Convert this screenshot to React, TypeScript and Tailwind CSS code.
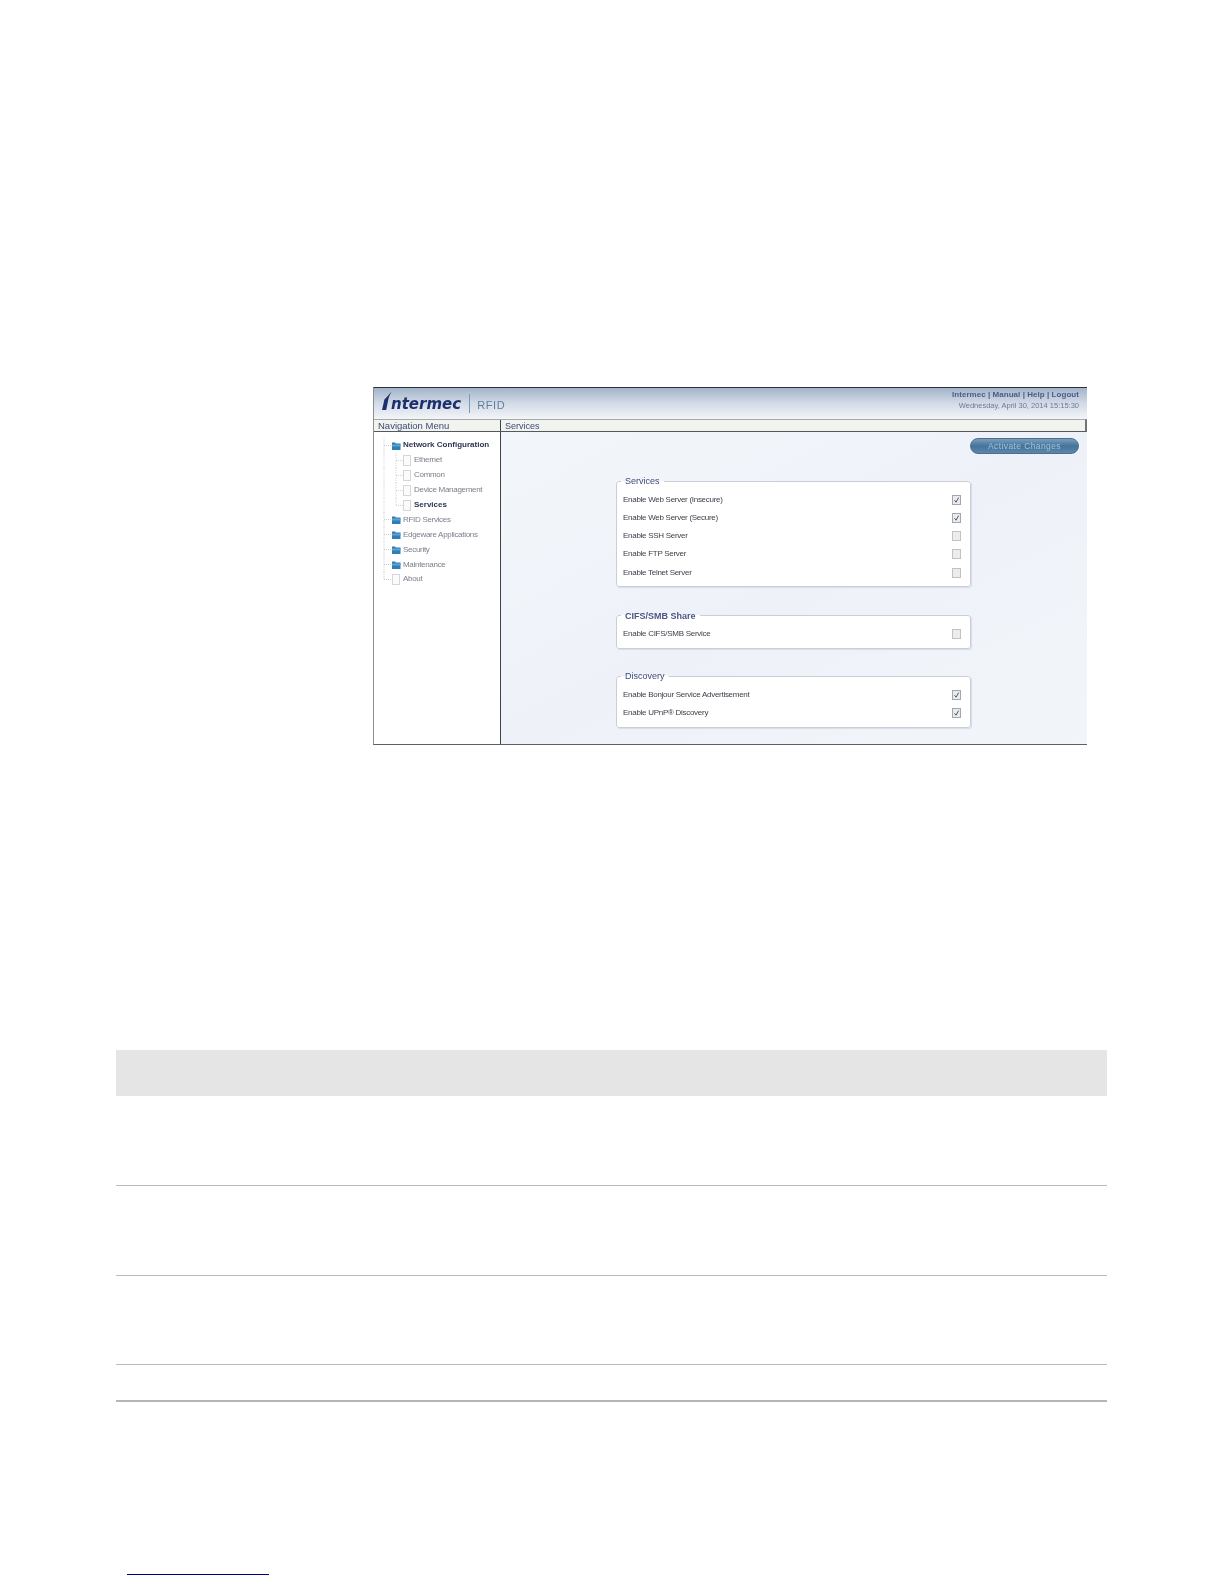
const font = "font-['Liberation_Sans',Arial,sans-serif]";

function Folder() {
  return (
    <g>
      <path d="M18 4.5h3l1 1h4.5v6.5H18z" fill="#2f7fb5" />
      <path d="M18 6.5h8.5v2H18z" fill="#5aa5d6" />
    </g>
  );
}

function Page({ x }: { x: number }) {
  return <rect x={x + 0.5} y="2.5" width="7" height="10" fill="#fbfbfb" stroke="#d6d6d6" strokeWidth="1" />;
}

function TreeGlyph({ kind, last }: { kind: "folder" | "page" | "child"; last?: boolean }) {
  const w = kind === "child" ? 39 : 28;
  return (
    <svg width={w} height="15" viewBox={`0 0 ${w} 15`} className="shrink-0">
      {kind !== "child" && <path d={`M10 0V${last ? 7.5 : 15}M10 7.5h8`} stroke="#d0d0d0" strokeWidth="1" strokeDasharray="1 1" fill="none" />}
      {kind === "child" && <path d={`M10 0V15M22 0V${last ? 7.5 : 15}M22 7.5h7`} stroke="#d4d4d4" strokeWidth="1" strokeDasharray="1 1" fill="none" />}
      {kind === "folder" && <Folder />}
      {kind === "page" && <Page x={18} />}
      {kind === "child" && <Page x={29} />}
    </svg>
  );
}

function TreeRow({
  kind,
  label,
  bold,
  last,
}: {
  kind: "folder" | "page" | "child";
  label: string;
  bold?: boolean;
  last?: boolean;
}) {
  return (
    <div className="flex h-[14.9px] items-center">
      <TreeGlyph kind={kind} last={last} />
      <span
        className={
          bold
            ? "ml-[1px] whitespace-nowrap text-[8px] font-bold leading-none text-[#2c3550]"
            : "ml-[1px] whitespace-nowrap text-[8px] leading-none tracking-[-0.3px] text-[#7a7f88]"
        }
      >
        {label}
      </span>
    </div>
  );
}

function CheckBox({ checked }: { checked?: boolean }) {
  return (
    <svg width="9" height="10" viewBox="0 0 9 10" className="shrink-0">
      <rect x="0.5" y="0.5" width="8" height="9" fill={checked ? "#e9ebee" : "#ececec"} stroke={checked ? "#a2a7ad" : "#bfc2c6"} strokeWidth="1" />
      {checked && <path d="M2.5 5.2l1.6 2L6.6 2.6" fill="none" stroke="#555b64" strokeWidth="1" />}
    </svg>
  );
}

function SettingRow({ label, checked }: { label: string; checked?: boolean }) {
  return (
    <div className="flex h-[18.25px] items-center justify-between pl-[6px] pr-[9px]">
      <span className="whitespace-nowrap text-[8px] leading-none tracking-[-0.28px] text-[#3a3f47]">{label}</span>
      <CheckBox checked={checked} />
    </div>
  );
}

function Group({
  title,
  bold,
  className,
  children,
}: {
  title: string;
  bold?: boolean;
  className?: string;
  children: React.ReactNode;
}) {
  return (
    <fieldset
      className={`ml-[115px] w-[355px] rounded-[3px] border border-[#c9cfd8] bg-white pt-[3.5px] shadow-[1px_1px_1px_#d9dee6] ${className ?? ""}`}
    >
      <legend
        className={
          bold
            ? "ml-[4px] px-[4px] text-[9px] font-bold leading-[12px] text-[#4b5684]"
            : "ml-[4px] px-[4px] text-[9px] leading-[12px] text-[#3f4a78]"
        }
      >
        {title}
      </legend>
      {children}
    </fieldset>
  );
}

function Screenshot() {
  return (
    <div className="flex h-[358px] w-[714px] flex-col border-b border-l border-t border-[#5c5f64] border-l-[#8a8d92] border-t-[#2f3238] blur-[0.6px]">
      <div className="flex h-[31px] items-start justify-between bg-gradient-to-b from-[#a3b4ca] via-[#d3dbe7] to-[#f3f5f8] pl-[7px] pr-[8px]">
        <div className="flex items-center pt-[2px]">
          <svg width="12" height="21" viewBox="0 0 12 21" className="shrink-0">
            <path d="M10.5 0.5C8.8 4 7.6 6 7.2 9L5.2 19H1L3.4 8.6C5 6.8 8.4 3.2 10.5 0.5z" fill="#1c2f6e" />
          </svg>
          <span className="ml-[-2px] mt-[5px] font-['DejaVu_Sans',sans-serif] text-[15px] font-bold italic leading-none text-[#1c2f6e]">
            ntermec
          </span>
          <span className="ml-[8px] mt-[4px] h-[19px] w-px bg-[#7d97b5]" />
          <span className="ml-[7px] mt-[7px] text-[11px] leading-none tracking-[0.6px] text-[#5f7da0]">RFID</span>
        </div>
        <div className="flex flex-col items-end pt-[1px]">
          <span className="text-[8px] font-bold leading-[11px] tracking-[0.05px] text-[#4d5b86]">
            Intermec | Manual | Help | Logout
          </span>
          <span className="pt-[1px] text-[7.5px] leading-[10px] text-[#6d7a92]">Wednesday, April 30, 2014 15:15:30</span>
        </div>
      </div>
      <div className="flex h-[13px] border-y border-b-[#55585c] border-t-[#a4a8a8] bg-[#f1f3ee] border-r-2 border-r-[#707478]">
        <div className="w-[127px] border-r border-[#3f4246] pl-[4px] text-[9.5px] font-medium leading-[11px] text-[#3c4a78]">
          Navigation Menu
        </div>
        <div className="pl-[4px] text-[9px] leading-[12px] text-[#3c4a78]">Services</div>
      </div>
      <div className="flex min-h-0 flex-1">
        <div className="w-[127px] shrink-0 border-r border-[#3f4246] bg-white pt-[6px]">
          <TreeRow kind="folder" label="Network Configuration" bold />
          <TreeRow kind="child" label="Ethernet" />
          <TreeRow kind="child" label="Common" />
          <TreeRow kind="child" label="Device Management" />
          <TreeRow kind="child" label="Services" bold last />
          <TreeRow kind="folder" label="RFID Services" />
          <TreeRow kind="folder" label="Edgeware Applications" />
          <TreeRow kind="folder" label="Security" />
          <TreeRow kind="folder" label="Maintenance" />
          <TreeRow kind="page" label="About" last />
        </div>
        <div className="flex-1 bg-gradient-to-br from-[#f3f6fb] via-[#eef2f8] to-[#f2f5fa] pt-[6px]">
          <div className="flex justify-end pr-[8px]">
            <div className="flex h-[16px] w-[109px] items-center justify-center rounded-full border border-[#4d6f8f] bg-gradient-to-b from-[#7c9dbb] via-[#43749c] to-[#5c87a9] text-[8.5px] tracking-[0.4px] text-[#a7c0d4]">
              Activate Changes
            </div>
          </div>
          <Group title="Services" className="mt-[21px] pb-[4px]">
            <SettingRow label="Enable Web Server (Insecure)" checked />
            <SettingRow label="Enable Web Server (Secure)" checked />
            <SettingRow label="Enable SSH Server" />
            <SettingRow label="Enable FTP Server" />
            <SettingRow label="Enable Telnet Server" />
          </Group>
          <Group title="CIFS/SMB Share" bold className="mt-[23px] pb-[4px]">
            <SettingRow label="Enable CIFS/SMB Service" />
          </Group>
          <Group title="Discovery" className="mt-[21.5px] pb-[5px]">
            <SettingRow label="Enable Bonjour Service Advertisement" checked />
            <SettingRow label="Enable UPnP® Discovery" checked />
          </Group>
        </div>
      </div>
    </div>
  );
}

export default function App() {
  return (
    <div className={`h-[1584px] w-[1224px] overflow-hidden bg-white pl-[116px] pt-[387px] ${font}`}>
      <div className="ml-[257px]">
        <Screenshot />
      </div>
      <div className="mt-[305px] w-[991px]">
        <div className="h-[46px] bg-[#e5e5e5]" />
        <div className="h-[90px] border-b border-[#bbbbbb]" />
        <div className="h-[90px] border-b border-[#bbbbbb]" />
        <div className="h-[89px] border-b border-[#bbbbbb]" />
        <div className="h-[37px] border-b-2 border-[#b5b5b5]" />
      </div>
      <div className="ml-[11px] mt-[172px] h-px w-[142px] bg-[#000080]" />
    </div>
  );
}
